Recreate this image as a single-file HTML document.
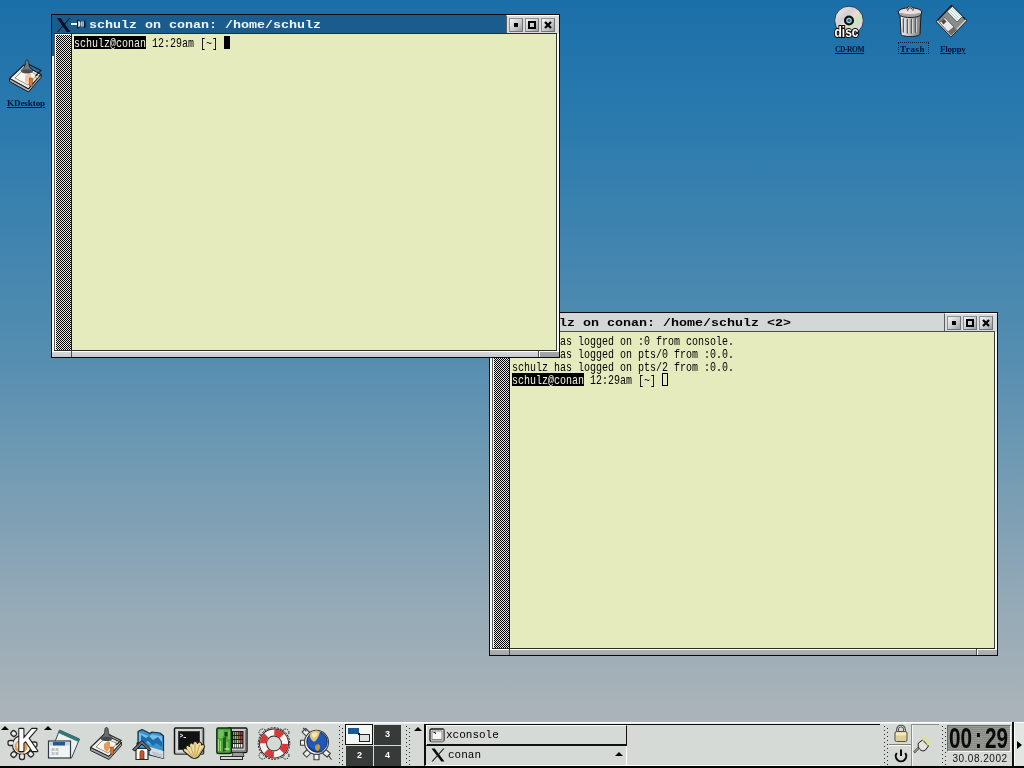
<!DOCTYPE html>
<html lang="en">
<head>
<meta charset="utf-8">
<title>KDE Desktop</title>
<style>
*{box-sizing:border-box;margin:0;padding:0}
html,body{width:1024px;height:768px;overflow:hidden}
body{position:relative;font-family:"Liberation Sans",sans-serif;
 background:linear-gradient(to bottom,#1b6fa8 0px,#2a7aae 120px,#568eb0 360px,#94a9b6 600px,#acb4b9 722px,#acb4b9 768px);}
.abs{position:absolute}
/* desktop icons */
.dlabel{position:absolute;font-family:"Liberation Serif",serif;font-weight:bold;font-size:10px;line-height:11px;color:#001236;text-decoration:underline;white-space:nowrap;letter-spacing:.3px}
/* windows */
.win{position:absolute;background:#d2d6d4;border:1px solid #060a12}
.title{position:absolute;left:0;top:0;right:0;height:19px;font-family:"Liberation Mono",monospace;font-weight:bold;font-size:11px;line-height:20px;white-space:nowrap;overflow:hidden}
.title span.t{position:absolute;top:0;transform-origin:0 0;transform:scaleX(1.2121)}
.term{position:absolute;background:#e6ebbd;font-family:"Liberation Mono",monospace;font-size:10px;line-height:13px;color:#000;white-space:pre;overflow:hidden}
.term .ln{position:absolute;left:0;height:13px;width:480px}
.term .tx{position:absolute;left:0;top:0;height:13px;transform-origin:0 9.160px;transform:translateY(1.800px) scaleY(1.28)}
.term .ib{position:absolute;left:0;top:0;width:72px;height:13px;background:#000}
.term .cf{position:absolute;left:150px;top:0;width:6px;height:13px;background:#000}
.term .co{position:absolute;left:150px;top:0;width:6px;height:13px;border:1px solid #000}
.inv{color:#f4f4e4}
.sb{position:absolute;background-color:#d8d8c8;background-image:conic-gradient(#000 25%,#e8e8d8 0 50%,#000 0 75%,#e8e8d8 0);background-size:2px 2px}
.wb{position:absolute;top:3px;width:14px;height:14px;background:linear-gradient(135deg,#f4f4f4,#c4c8c8 60%,#9a9e9e);border:1px solid #70747a;border-top-color:#8a8e92;border-left-color:#8a8e92}
/* panel */
#panel{position:absolute;left:0;top:722px;width:1024px;height:46px;background:#d6dad6;box-shadow:inset 0 1px 0 #fff,inset 0 2px 0 #eceeec,inset 0 -2px 0 #000}
.hdl{position:absolute;top:4px;width:6px;height:40px;background-image:linear-gradient(#2a2a2a 1.3px,transparent 1.3px),linear-gradient(#2a2a2a 1.3px,transparent 1.3px);background-repeat:repeat-y;background-size:1.3px 4px,1.3px 4px;background-position:1px 0,4px 2px}
.tri{position:absolute;width:0;height:0;border-left:4px solid transparent;border-right:4px solid transparent;border-bottom:4px solid #000}
.pg{position:absolute;background:#363a38;color:#fff;font:bold 9px/19px "Liberation Sans",sans-serif;text-align:center}
.lcd{position:absolute;top:2.500px;height:26px;font:bold 30px/26px "Liberation Sans",sans-serif;color:#0a0a0a;white-space:nowrap;transform-origin:0 0;transform:scaleX(.69)}
.tb{position:absolute;font-family:"Liberation Mono",monospace;font-size:11px;color:#000;white-space:nowrap}
</style>
</head>
<body>
<div id="root" style="position:absolute;left:0;top:0;width:1024px;height:768px;will-change:transform">

<!-- DESKTOP ICONS -->
<div id="icons">
<svg class="abs" style="left:0;top:56px" width="50" height="40" viewBox="0 56 50 40">
<path d="M9.500 78.500L24 65L41 74.500L28.500 89Z" fill="#f0eeea" stroke="#1a1a22" stroke-width="1.200" stroke-linejoin="round"/>
<path d="M9.500 78.500L28.500 89L41 74.500L41 77.500L28.500 92L9.500 81.500Z" fill="#a8aab0" stroke="#1a1a22" stroke-width="1" stroke-linejoin="round"/>
<path d="M15 78L25 68.500L37 75L28 85Z" fill="#fcf8f2" stroke="#555" stroke-width=".6"/>
<path d="M25 81v-5l4-3 2 1v6l-3 4z" fill="#f0c8a8"/>
<rect x="29.500" y="78" width="2.800" height="8" fill="#e0782c" stroke="#6a3a10" stroke-width=".5"/>
<circle cx="37" cy="76.500" r="1.600" fill="#f0f0b0" stroke="#6a7a30" stroke-width=".6"/>
<path d="M29 64.500L41 70.500L35.500 76" fill="none" stroke="#1a1a22" stroke-width="1.200"/>
<path d="M27 60c1.200 0 1.500 1 1.600 2.500c.3 4 1.200 5.500 3.400 7c1.500 1 .8 3.500-5 3.500s-6.500-2.500-5-3.500c2.200-1.500 3.100-3 3.400-7c.100-1.500 .400-2.500 1.600-2.500z" fill="#74787c" stroke="#1a1a22" stroke-width=".8"/>
<ellipse cx="27" cy="71" rx="4.500" ry="1.800" fill="#4a4e52"/>
</svg>
<span class="dlabel" style="left:7px;top:98px;font-size:9px;letter-spacing:-.06px">KDesktop</span>

<svg class="abs" style="left:830px;top:2px" width="40" height="40" viewBox="830 2 40 40">
<defs><linearGradient id="cdg" x1="0" y1="0" x2="1" y2="1"><stop offset="0" stop-color="#f2f2f2"/><stop offset=".35" stop-color="#d0d0d4"/><stop offset=".5" stop-color="#f0d8d8"/><stop offset=".6" stop-color="#c8e8b8"/><stop offset=".75" stop-color="#d8d8dc"/><stop offset="1" stop-color="#f4f4f4"/></linearGradient></defs>
<circle cx="849" cy="20.500" r="14.300" fill="url(#cdg)" stroke="#20304a" stroke-width=".9"/>
<circle cx="849" cy="20.500" r="4" fill="#2a7a8a" stroke="#0a0a0a" stroke-width="2"/>
<circle cx="849" cy="20.500" r="2.200" fill="none" stroke="#d8f0f0" stroke-width=".8"/>
<text x="834.500" y="36.600" font-family="Liberation Sans, sans-serif" font-weight="bold" font-size="14.500" fill="#fff" stroke="#0a0a0a" stroke-width="2.200" paint-order="stroke" textLength="24" lengthAdjust="spacingAndGlyphs">disc</text>
</svg>
<span class="dlabel" style="left:835px;top:44px;font-size:7.500px;letter-spacing:-.44px">CD-ROM</span>

<svg class="abs" style="left:894px;top:2px" width="32" height="38" viewBox="894 2 32 38">
<defs><linearGradient id="trg" x1="0" y1="0" x2="1" y2="0"><stop offset="0" stop-color="#f4f4f4"/><stop offset=".3" stop-color="#d4d4d4"/><stop offset="1" stop-color="#787a7c"/></linearGradient></defs>
<path d="M900 15L901 34c0 1.500 4 2.500 9.500 2.500s9.500-1 9.500-2.500L921 15Z" fill="url(#trg)" stroke="#1a1a22" stroke-width="1"/>
<path d="M903.500 19v13M907.500 19.500v13.500M911.500 19.500v13.500M915.500 19v13" stroke="#5a5c5e" stroke-width="1.600" stroke-linecap="round"/>
<path d="M904.500 19v13M908.500 19.500v13.500M912.500 19.500v13.500M916.500 19v13" stroke="#f4f4f4" stroke-width=".7" stroke-linecap="round"/>
<ellipse cx="910" cy="12" rx="11.800" ry="4.200" fill="#e0dedf" stroke="#1a1a22" stroke-width="1"/>
<path d="M898.500 13c0 3 5 4.500 11.500 4.500s11.500-1.500 11.500-4.500" fill="#a0a2a4" stroke="#1a1a22" stroke-width="1"/>
<ellipse cx="910" cy="11.500" rx="9.500" ry="2.800" fill="#ecdede"/>
<path d="M908 10.500c-1-2 0-3.500 2-3.500s3.500 1.500 2.500 3.500" fill="none" stroke="#1a1a22" stroke-width="1.800"/>
<path d="M908 10.500c-1-2 0-3.500 2-3.500s3.500 1.500 2.500 3.500" fill="none" stroke="#f4f4f4" stroke-width=".7"/>
</svg>
<span class="dlabel" style="left:900px;top:44px;font-size:9px;letter-spacing:.53px">Trash</span>
<div class="abs" style="left:898px;top:42px;width:31px;height:12px;border:1px dotted #0a1a3a"></div>

<svg class="abs" style="left:932px;top:2px" width="40" height="38" viewBox="932 2 40 38">
<path d="M936.500 21.500L951.500 5.500L966.500 20.500L951 36.500Z" fill="#8a8c8a" stroke="#141418" stroke-width="1.300" stroke-linejoin="round"/>
<path d="M936.500 21.500L951 36.500L966.500 20.500L965.500 19.500L951 34.500L937.500 20.500Z" fill="#d8d8d4"/>
<path d="M947 11.500L952.500 6.500L962.500 16.500L957 22Z" fill="#f0f8f8" stroke="#3a3c3a" stroke-width=".7"/>
<path d="M949 11l9 9M950.500 9.500l9 9M952 8l9 9" stroke="#a8c8c8" stroke-width=".8"/>
<path d="M939.500 22.500L945 17.500L954 27L948 32Z" fill="#e8e8e8" stroke="#3a3c3a" stroke-width=".7"/>
<path d="M941 21.500L944 19L946.500 21.500L943.500 24.500Z" fill="#4a4c4a"/>
<path d="M948 32L954 27L957 30L951 35.500Z" fill="#6a6c6a"/>
</svg>
<span class="dlabel" style="left:940px;top:44px;font-size:9px;letter-spacing:-.23px">Floppy</span>
</div>

<!-- WINDOW 2 (inactive, behind) -->
<div class="win" id="w2" style="left:489px;top:312px;width:509px;height:344px">
<div class="abs" style="left:0;top:19px;width:2px;height:323px;background:#fbfbfb"></div>
<div class="title" style="background:#d3d7d6;color:#000">
<span class="t" style="left:37px">schulz on conan: /home/schulz &lt;2&gt;</span>
<div class="abs" style="left:454px;top:0;width:53px;height:19px;background:#d8dcdb;border-left:1px solid #5a5e60;border-top:1px solid #fff"></div>
<div class="wb" style="left:457px"><i class="abs" style="left:4px;top:4px;width:4px;height:4px;background:#000"></i></div>
<div class="wb" style="left:473px"><i class="abs" style="left:2px;top:2px;width:8px;height:8px;border:2px solid #000"></i></div>
<div class="wb" style="left:489px"><svg class="abs" style="left:2px;top:2px" width="8" height="8" viewBox="0 0 8 8"><path d="M1 1L7 7M7 1L1 7" stroke="#000" stroke-width="2.200"/></svg></div>
</div>
<div class="abs" style="left:2px;top:19px;width:1px;height:317px;background:#5a5c58"></div>
<div class="abs" style="left:3px;top:19px;width:17px;height:317px;background:#f8f8ee"></div>
<div class="sb" style="left:4px;top:20px;width:15px;height:315px"></div>
<div class="abs" style="left:19px;top:19px;width:1px;height:317px;background:#1c1e1a"></div>
<div class="term" style="left:20px;top:19px;width:484px;height:316px">
<div class="ln" style="top:2px;left:2px"><div class="tx">schulz has logged on :0 from console.</div></div>
<div class="ln" style="top:15px;left:2px"><div class="tx">schulz has logged on pts/0 from :0.0.</div></div>
<div class="ln" style="top:28px;left:2px"><div class="tx">schulz has logged on pts/2 from :0.0.</div></div>
<div class="ln" style="top:41px;left:2px"><i class="ib"></i><i class="co"></i><div class="tx"><span class="inv">schulz@conan</span> 12:29am [~] </div></div>
</div>
<div class="abs" style="left:504px;top:18px;width:1px;height:318px;background:#3a3c38"></div>
<div class="abs" style="left:505px;top:19px;width:2px;height:317px;background:#fafafa"></div>
<div class="abs" style="left:2px;top:18px;width:503px;height:1px;background:#4a4c48"></div>
<div class="abs" style="left:2px;top:335px;width:503px;height:1px;background:#2a2c28"></div>
<div class="abs" style="left:0;top:336px;width:507px;height:6px;background:linear-gradient(#fff 0,#fff 1px,#aeb2b2 1px,#a2a6a6 100%)"></div>
<div class="abs" style="left:19px;top:336px;width:1px;height:6px;background:#4a4e50"></div>
<div class="abs" style="left:486px;top:336px;width:1px;height:6px;background:#4a4e50"></div>
<div class="abs" style="left:487px;top:336px;width:20px;height:6px;background:linear-gradient(#fff 0,#fff 1px,#b0b4b4 1px,#a6aaaa 100%);border-left:1px solid #fff"></div>
</div>

<!-- WINDOW 1 (active) -->
<div class="win" id="w1" style="left:51px;top:14px;width:509px;height:344px">
<div class="abs" style="left:0;top:0;width:3px;height:41px;background:#1b5c8e"></div>
<div class="abs" style="left:0;top:41px;width:2px;height:301px;background:#fbfbfb"></div>
<div class="title" style="background:#1b5c8e;color:#f2f6f8">
<svg class="abs" style="left:5px;top:1px" width="32" height="18" viewBox="0 0 32 18"><path d="M0 2H3.600L13.500 16H9.800Z" fill="#04101f"/><path d="M12.300 2H13.500L1.200 16H0Z" fill="#04101f"/><path d="M14 7h6.500v2H14z" fill="#f2f6f8"/><path d="M20.500 4.200c2 0 3.500 1.300 3.500 3.800s-1.500 3.800-3.500 3.800z" fill="#e4ecee" stroke="#08182c" stroke-width=".9"/><path d="M24.700 5.500v5M26.200 5.500v5" stroke="#f2f6f8" stroke-width=".9"/><path d="M27 4.500h1.600v7.500H27z" fill="#08182c"/><path d="M20 3.800h1.200v8.600H20z" fill="#08182c"/></svg>
<span class="t" style="left:37px">schulz on conan: /home/schulz</span>
<div class="abs" style="left:454px;top:0;width:53px;height:19px;background:#d8dcdb;border-left:1px solid #5a5e60;border-top:1px solid #fff"></div>
<div class="wb" style="left:457px"><i class="abs" style="left:4px;top:4px;width:4px;height:4px;background:#000"></i></div>
<div class="wb" style="left:473px"><i class="abs" style="left:2px;top:2px;width:8px;height:8px;border:2px solid #000"></i></div>
<div class="wb" style="left:489px"><svg class="abs" style="left:2px;top:2px" width="8" height="8" viewBox="0 0 8 8"><path d="M1 1L7 7M7 1L1 7" stroke="#000" stroke-width="2.200"/></svg></div>
</div>
<div class="abs" style="left:2px;top:19px;width:1px;height:317px;background:#5a5c58"></div>
<div class="abs" style="left:3px;top:19px;width:17px;height:317px;background:#f8f8ee"></div>
<div class="sb" style="left:4px;top:20px;width:15px;height:315px"></div>
<div class="abs" style="left:19px;top:19px;width:1px;height:317px;background:#1c1e1a"></div>
<div class="term" style="left:20px;top:19px;width:484px;height:316px">
<div class="ln" style="top:2px;left:2px"><i class="ib"></i><i class="cf"></i><div class="tx"><span class="inv">schulz@conan</span> 12:29am [~] </div></div>
</div>
<div class="abs" style="left:504px;top:18px;width:1px;height:318px;background:#3a3c38"></div>
<div class="abs" style="left:505px;top:19px;width:2px;height:317px;background:#fafafa"></div>
<div class="abs" style="left:2px;top:18px;width:503px;height:1px;background:#0c3556"></div>
<div class="abs" style="left:2px;top:335px;width:503px;height:1px;background:#2a2c28"></div>
<div class="abs" style="left:0;top:336px;width:507px;height:6px;background:linear-gradient(#fff 0,#fff 1px,#d6dada 1px,#c6caca 100%)"></div>
<div class="abs" style="left:19px;top:336px;width:1px;height:6px;background:#4a4e50"></div>
<div class="abs" style="left:486px;top:336px;width:1px;height:6px;background:#4a4e50"></div>
<div class="abs" style="left:487px;top:336px;width:20px;height:6px;background:linear-gradient(#fff 0,#fff 1px,#a4a8a8 1px,#989c9c 100%);border-left:1px solid #fff"></div>
</div>

<!-- PANEL -->
<div id="panel">
<!-- handles -->
<div class="hdl" style="left:338px"></div>
<div class="hdl" style="left:405px"></div>
<div class="hdl" style="left:883px"></div>
<div class="hdl" style="left:941px"></div>
<div class="tri" style="left:1px;top:4px"></div>
<div class="tri" style="left:44px;top:4px"></div>
<div class="tri" style="left:414px;top:5px"></div>
<svg class="abs" style="left:0;top:0" width="340" height="46" viewBox="0 1 340 46">
<!-- K menu -->
<g id="kmenu" transform="translate(0,-1)">
<g transform="translate(0,1.500)">
<g fill="#e8ebe8" stroke="#2a2c2c" stroke-width="1.3" stroke-linejoin="round">
<circle cx="22" cy="23.500" r="9.500"/>
<rect x="19.500" y="32" width="5" height="6" rx="2"/>
<rect x="8" y="19" width="6" height="5" rx="2"/>
<rect x="11" y="9.500" width="5.500" height="5" rx="2" transform="rotate(45 13.700 12)"/>
<rect x="11" y="30.500" width="5.500" height="5" rx="2" transform="rotate(-45 13.700 33)"/>
<rect x="28" y="30" width="5.500" height="5" rx="2" transform="rotate(45 30.700 32.500)"/>
<rect x="31.500" y="20.500" width="5.500" height="5" rx="2"/>
</g>
<circle cx="22" cy="23.500" r="8.800" fill="#eceeec"/>
<circle cx="21" cy="25" r="6.500" fill="#e0a050"/>
<circle cx="20" cy="24" r="3.500" fill="#f4dcb0"/>
</g>
<text x="17.500" y="30.800" font-family="Liberation Sans, sans-serif" font-weight="bold" font-size="31" fill="#fff" stroke="#1a1a1a" stroke-width="2.400" paint-order="stroke" stroke-linejoin="round" textLength="20" lengthAdjust="spacingAndGlyphs">K</text>
</g>
<!-- window list -->
<g id="wlist" transform="translate(0,-1.500)">
<path d="M59.500 10.500L79.500 19.500L71.500 38.500L52 30Z" fill="#eef0ee" stroke="#3a4a48" stroke-width="1"/>
<path d="M59.500 10.500L79.500 19.500L78.500 22.500L58.500 13.500Z" fill="#2a7a78"/>
<rect x="48.500" y="21.500" width="22" height="17" fill="#f2f4f4" stroke="#2a3a48" stroke-width="1.200"/>
<rect x="49.500" y="22.500" width="20" height="3.500" fill="#c8d0dc"/>
<rect x="53" y="22.500" width="12" height="3.500" fill="#1e5a94"/>
<rect x="51.500" y="28.500" width="7" height="7" fill="#c0c4c0"/>
<path d="M55 28.500v7M51.500 32h7" stroke="#f4f4f4" stroke-width="1"/>
</g>
<!-- kdesktop -->
<g id="kdesk">
<path d="M90.500 26.500L104 13.500L121.500 21.500L109 35.500Z" fill="#f0eeec" stroke="#2a2a2a" stroke-width="1.200" stroke-linejoin="round"/>
<path d="M90.500 26.500L109 35.500L121.500 21.500L121.500 24.500L109 38.500L90.500 29.500Z" fill="#9a9ca0" stroke="#2a2a2a" stroke-width="1" stroke-linejoin="round"/>
<path d="M96 26L105 17L117 22.500L108 32Z" fill="#fbf6f0" stroke="#555" stroke-width=".6"/>
<path d="M104 28l0-5 4-3 2 1v6l-3 4z" fill="#e89a58"/>
<rect x="110.500" y="26" width="3" height="7" fill="#d8742c" stroke="#6a3a10" stroke-width=".5"/>
<circle cx="117.500" cy="21.500" r="1.600" fill="#e8f0a0" stroke="#5a7a30" stroke-width=".6"/>
<path d="M108 13L121 19.500L116 24" fill="none" stroke="#2a2a2a" stroke-width="1.200"/>
<path d="M106.500 6.500c1.200 0 1.500 1 1.600 2.500c.3 4 1.200 5.500 3.400 7c1.500 1 .8 3.500-5 3.500s-6.500-2.500-5-3.500c2.200-1.500 3.100-3 3.400-7c.100-1.500 .400-2.500 1.600-2.500z" fill="#6a6e70" stroke="#222" stroke-width=".8"/>
<ellipse cx="106.500" cy="17.500" rx="4.500" ry="1.800" fill="#44484a"/>
</g>
<!-- home -->
<g id="home">
<path d="M138 10.500L142 8.500L150 12.500L152 11L160 12L163.500 15L163.500 37.500L138 31Z" fill="#3a94cc" stroke="#1a2a3a" stroke-width="1.200" stroke-linejoin="round"/>
<path d="M139 11.500l10 4 3-2 10 2v8l-8-3-4 3-5-4-6 1z" fill="#8cc8ec" opacity=".8"/>
<path d="M141 14l5 3 3-2 4 4 5-3 4 5v5l-6-4-3 3-5-5-4 2-3-3z" fill="#1e6cb0"/>
<path d="M150 26l13.500 4v7.500l-13.500-4z" fill="#d8dce0"/>
<path d="M152 31l10 3M153 33l9 3" stroke="#a8acb0" stroke-width=".8"/>
<path d="M136.500 21.500h3v6h-3z" fill="#222"/>
<path d="M136 38.500V27.500h12v11z" fill="#f6f6f2" stroke="#2a2a2a" stroke-width="1.200"/>
<path d="M132.500 28.500L142 19.500L151 28.500L149 30L142 23L135 30Z" fill="#6a6a6a" stroke="#1a1a1a" stroke-width="1" stroke-linejoin="round"/>
<path d="M140 38v-6.500a2 2 0 0 1 4 0V38z" fill="#c45a28" stroke="#5a2410" stroke-width=".7"/>
</g>
<!-- konsole -->
<g id="konsole">
<rect x="174.500" y="7" width="29" height="26" rx="1" fill="#d4d6d4" stroke="#141414" stroke-width="1.500"/>
<path d="M175.500 32.500h27v-25" fill="none" stroke="#8a8c8a" stroke-width="1.500"/>
<rect x="178.500" y="10.500" width="21" height="18" fill="#101214" stroke="#3a3c3c" stroke-width="1"/>
<path d="M180 13l3 1.500-3 1.500" fill="none" stroke="#f4f4f4" stroke-width="1"/>
<path d="M183.500 16.500h2.500" stroke="#f4f4f4" stroke-width="1"/>
<path d="M194 37.500c-2 0-3-1-5-3l-5-4c-1.500-1.500-.5-3.500 1.500-3l1 .5c-1.500-2.500.5-4.500 2.500-3l.5.500c-.5-3 2-4.500 3.500-2.500c.5-3 3.500-3.500 4.500-.5c1.500-2.500 4.500-1.500 4 1.500c2-1.500 4 .5 2.500 3l-4.500 7.500c-1.500 2.500-3 3-5.500 3z" fill="#f0dc9c" stroke="#2a2418" stroke-width="1.100" stroke-linejoin="round"/>
<path d="M193 36l-6-8M194 35.500l-3.500-10.500M195 35.500l0-12.500M196 35.500l3.500-11.500M197 36l5.500-8.500" stroke="#b89a50" stroke-width=".9" fill="none"/>
</g>
<!-- kcontrol -->
<g id="kcontrol">
<rect x="228" y="7" width="19" height="24.500" rx="1.500" fill="#c8cac8" stroke="#141414" stroke-width="1.400"/>
<path d="M245.500 9v21h-16" fill="none" stroke="#7a7c7a" stroke-width="1.400"/>
<rect x="232" y="10" width="11.500" height="17.500" fill="#181a1c"/>
<g>
<rect x="233" y="11" width="1.400" height="3" fill="#3ab070"/><rect x="235" y="11" width="1.400" height="3" fill="#c8a030"/><rect x="237" y="11" width="1.400" height="3" fill="#d87030"/><rect x="239" y="11" width="1.400" height="3" fill="#c83030"/><rect x="241" y="11" width="1.400" height="3" fill="#b02828"/>
<rect x="233" y="15" width="1.400" height="3" fill="#30b890"/><rect x="235" y="15" width="1.400" height="3" fill="#d0b030"/><rect x="237" y="15" width="1.400" height="3" fill="#e08838"/><rect x="239" y="15" width="1.400" height="3" fill="#d04040"/><rect x="241" y="15" width="1.400" height="3" fill="#b83030"/>
<rect x="233" y="19" width="1.400" height="3" fill="#40c8a8"/><rect x="235" y="19" width="1.400" height="3" fill="#60c040"/><rect x="237" y="19" width="1.400" height="3" fill="#e0d040"/><rect x="239" y="19" width="1.400" height="3" fill="#e07040"/><rect x="241" y="19" width="1.400" height="3" fill="#c83838"/>
<rect x="233" y="23" width="1.400" height="3.500" fill="#e8f4e8"/><rect x="235" y="23" width="1.400" height="3.500" fill="#e8f4e8"/><rect x="237" y="23" width="1.400" height="3.500" fill="#f4f4e0"/><rect x="239" y="23" width="1.400" height="3.500" fill="#f4e0e0"/><rect x="241" y="23" width="1.400" height="3.500" fill="#f4e0e0"/>
</g>
<path d="M233 31.500h10l1 4h-12z" fill="#9a9c9a" stroke="#2a2a2a" stroke-width=".8"/>
<rect x="220.500" y="35.500" width="22" height="3" fill="#d8dad8" stroke="#2a2a2a" stroke-width="1"/>
<rect x="216.800" y="7" width="14.500" height="25.500" rx="1.500" fill="#4ca83c" stroke="#102a10" stroke-width="1.400"/>
<path d="M218.500 10h5M218.500 12h5M218.500 14h5M218.500 16h4M218.500 18v12M220.500 20v10M229 10v8M227 21v8" stroke="#a8e088" stroke-width=".9"/>
<rect x="224.500" y="11" width="3" height="4.500" fill="#183a18"/>
<path d="M223 17l3-1.500v14l-3 1.500z" fill="#1e5a1e"/>
<path d="M224.500 28h5" stroke="#c8f0a0" stroke-width="1.200"/>
</g>
<!-- help -->
<g id="help">
<g fill="none" stroke="#1a1a1a" stroke-width="1">
<circle cx="262.500" cy="11.500" r="3.500" stroke-dasharray="1.500 1"/><circle cx="285.500" cy="11.500" r="3.500" stroke-dasharray="1.500 1"/>
<circle cx="262.500" cy="34.500" r="3.500" stroke-dasharray="1.500 1"/><circle cx="285.500" cy="34.500" r="3.500" stroke-dasharray="1.500 1"/>
<circle cx="274" cy="22.500" r="15.800" stroke-dasharray="2 1.200"/>
</g>
<circle cx="274" cy="22.500" r="11" fill="none" stroke="#2a1a1a" stroke-width="8"/>
<circle cx="274" cy="22.500" r="11" fill="none" stroke="#f6f2f2" stroke-width="6.200"/>
<circle cx="274" cy="22.500" r="11" fill="none" stroke="#d83838" stroke-width="6.200" stroke-dasharray="8.640 8.640" stroke-dashoffset="4.320" transform="rotate(22.500 274 22.500)"/>
</g>
<!-- konqueror -->
<g id="konq" transform="translate(0,.800)">
<g fill="#f0f2f0" stroke="#3a3c3c" stroke-width="1.100" stroke-linejoin="round">
<rect x="300.500" y="18.500" width="6" height="5"/>
<rect x="303" y="8" width="6" height="5" transform="rotate(45 306 10.500)"/>
<rect x="304" y="29" width="6" height="5" transform="rotate(-45 307 31.500)"/>
<rect x="314" y="32.500" width="5" height="5.500"/>
<rect x="323.500" y="29" width="6" height="5" transform="rotate(40 326.500 31.500)"/>
<path d="M303 6l3.500 3.500M328 33l3.500 5" fill="none"/>
</g>
<circle cx="316.500" cy="20.500" r="12" fill="#f0f2f0" stroke="#3a3c3c" stroke-width="1.100"/>
<circle cx="317" cy="20" r="10.300" fill="#1e58b8" stroke="#0a1a3a" stroke-width=".8"/>
<path d="M311 11c3-2.500 7-2.500 9-.5c-1 2-1 4-2 5s-1 3-3 4s-3-1-4.500-3s-.5-4 .5-5.500z" fill="#e4c478"/>
<path d="M312 12c2-1.500 4-1.500 6-.5c-1 1.500-1.500 3-3 4s-3.500-1-3-3.500z" fill="#f4e8b8"/>
<path d="M316 23c1.500-1 3.500-.5 4 1s-.5 4-2 5s-2.500-1-2.800-2.500s-.2-2.500 .8-3.500z" fill="#c49838"/>
<path d="M308.500 24a10.300 10.300 0 0 0 17 4a14 14 0 0 1-17-4z" fill="#0e2e78" opacity=".7"/>
</g>
</svg>
<!-- pager -->
<div class="abs" style="left:345px;top:2px;width:28px;height:21px;background:#f6f8f6;border:1px solid #111"></div>
<div class="abs" style="left:348px;top:6px;width:11px;height:6px;background:#1a5896"></div>
<div class="abs" style="left:358px;top:11px;width:2px;height:2px;background:#111"></div>
<div class="abs" style="left:359px;top:12px;width:11px;height:8px;background:#dfe3e1;border:1px solid #222;border-top-width:1px"></div>
<div class="pg" style="left:374px;top:3px;width:27px;height:20px">3</div>
<div class="pg" style="left:346px;top:24px;width:27px;height:20px">2</div>
<div class="pg" style="left:374px;top:24px;width:27px;height:20px">4</div>
<!-- taskbar -->
<div class="abs" style="left:424px;top:2px;width:456px;height:42px;border-top:1px solid #0c0c0c;border-left:2px solid #0c0c0c;border-bottom:1px solid #fff"></div>
<div class="abs" style="left:426px;top:3px;width:201px;height:21px;border-right:1px solid #111;border-bottom:2px solid #111;border-left:1px solid #f8f8f8;border-top:1px solid #f8f8f8"></div>
<div class="abs" style="left:626px;top:24px;width:1px;height:20px;background:#fff"></div>
<svg class="abs" style="left:429px;top:6px" width="16" height="16" viewBox="0 0 16 16"><rect x="1" y="1" width="14" height="12.500" rx="1.500" fill="#e8eae8" stroke="#1a1a1a" stroke-width="1.300"/><path d="M2 13.500h12.500v-12" fill="none" stroke="#8a8c8a" stroke-width="1"/><rect x="3" y="3" width="10" height="8.500" fill="#f8f8f6" stroke="#555" stroke-width=".7"/><path d="M4.500 4.500h2M6 5.500h1" stroke="#111" stroke-width="1"/></svg>
<span class="tb" style="left:446px;top:6px;line-height:14px">xconsole</span>
<svg class="abs" style="left:430px;top:25px" width="16" height="16" viewBox="0 0 16 16"><path d="M1.500 1.500h3.200L14.500 14.500h-3.200z" fill="#0a0a0a"/><path d="M13.200 1.500h1.300L2.800 14.500H1.500z" fill="#0a0a0a"/></svg>
<span class="tb" style="left:448px;top:26px;line-height:14px">conan</span>
<div class="tri" style="left:615px;top:30px"></div>
<!-- lock/logout -->
<div class="abs" style="left:911px;top:2px;width:1px;height:42px;background:#8a8e8c"></div>
<div class="abs" style="left:912px;top:2px;width:1px;height:42px;background:#f4f6f4"></div>
<div class="abs" style="left:889px;top:22px;width:22px;height:1px;background:#7a7e7c"></div>
<div class="abs" style="left:889px;top:23px;width:22px;height:1px;background:#fff"></div>
<div class="abs" style="left:912px;top:2px;width:27px;height:1px;background:#8a8e8c"></div>
<svg class="abs" style="left:888px;top:2px" width="54" height="42" viewBox="0 0 54 42">
<g transform="translate(0,-2)">
<path d="M9.500 10V7.500a3.500 3.500 0 0 1 7 0V10" fill="none" stroke="#3a3a3a" stroke-width="2.600"/>
<path d="M9.500 10V7.500a3.500 3.500 0 0 1 7 0V10" fill="none" stroke="#d0d0c8" stroke-width="1"/>
<rect x="7" y="9.500" width="12" height="10" rx="1.500" fill="#dccf98" stroke="#5a5238" stroke-width="1"/>
<rect x="8" y="10.500" width="10" height="3" fill="#f0e8c0"/>
</g>
<g transform="translate(0,-1.500)">
<path d="M8.800 30.500a5.200 5.200 0 1 0 8.400 0" fill="none" stroke="#0a0a0a" stroke-width="2"/>
<path d="M13 27v6.500" stroke="#0a0a0a" stroke-width="2"/>
</g>
<g transform="translate(-1.500,-2)">
<path d="M27.500 30.500L33 25" stroke="#1a1a1a" stroke-width="2.200"/><path d="M27.500 30.500L33 25" stroke="#f4f4f4" stroke-width="1"/>
<path d="M32 21l4-3 6 6-3 4c-2 1.500-4 1-5.500-.5s-2.500-4-1.500-6.500z" fill="#e4e4dc" stroke="#1a1a1a" stroke-width="1"/>
<path d="M36.500 18.500l3.500-3.500M40.500 22.500l3.500-3.500" stroke="#e8e850" stroke-width="1.800"/>
</g>
</svg>
<!-- clock -->
<div class="abs" style="left:947px;top:3px;width:64px;height:27px;background:#8f938b;border:1px solid #6a6e68;border-bottom-color:#f4f4f4;border-right-color:#f4f4f4;background-image:repeating-linear-gradient(to bottom,#979b93 0,#979b93 1px,#878b83 1px,#878b83 2px)"></div>
<div class="lcd" style="left:949px">00</div>
<div class="lcd" style="left:974.500px">:</div>
<div class="lcd" style="left:985px">29</div>
<div class="abs" style="left:947px;top:31px;width:66px;font:10px/12px 'Liberation Sans',sans-serif;color:#111;text-align:center;letter-spacing:.5px;white-space:nowrap">30.08.2002</div>
<!-- hide button -->
<div class="abs" style="left:1012px;top:0;width:2px;height:44px;background:#111"></div>
<div class="abs" style="left:1014px;top:1px;width:10px;height:43px;background:#e2e6e2;border-left:1px solid #fff"></div>
<div class="abs" style="left:1017px;top:19px;width:0;height:0;border-top:4px solid transparent;border-bottom:4px solid transparent;border-left:5px solid #000"></div>
</div>

</div>
</body>
</html>
